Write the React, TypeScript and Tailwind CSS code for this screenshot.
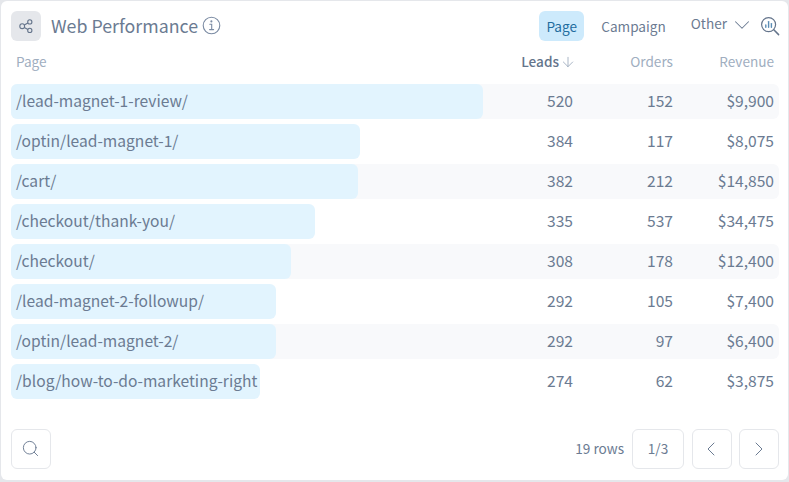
import { ArrowDown, ChevronDown, ChevronLeft, ChevronRight, Search } from "lucide-react";

const rows = [
  { page: "/lead-magnet-1-review/", leads: 520, orders: 152, revenue: "$9,900" },
  { page: "/optin/lead-magnet-1/", leads: 384, orders: 117, revenue: "$8,075" },
  { page: "/cart/", leads: 382, orders: 212, revenue: "$14,850" },
  { page: "/checkout/thank-you/", leads: 335, orders: 537, revenue: "$34,475" },
  { page: "/checkout/", leads: 308, orders: 178, revenue: "$12,400" },
  { page: "/lead-magnet-2-followup/", leads: 292, orders: 105, revenue: "$7,400" },
  { page: "/optin/lead-magnet-2/", leads: 292, orders: 97, revenue: "$6,400" },
  { page: "/blog/how-to-do-marketing-right", leads: 274, orders: 62, revenue: "$3,875" },
];

const maxLeads = 520;

function ShareIcon() {
  return (
    <svg width="16" height="16" viewBox="0 0 16 16" fill="none" stroke="#64748b" strokeWidth="1.1">
      <circle cx="4.2" cy="8.2" r="2.4" />
      <circle cx="11.8" cy="3.9" r="2.1" />
      <circle cx="11.8" cy="12.4" r="2.1" />
      <path d="M6.3 7 L9.9 5 M6.3 9.4 L9.9 11.4" />
    </svg>
  );
}

function InfoIcon() {
  return (
    <svg width="19" height="19" viewBox="0 0 19 19" fill="none" stroke="#7b8ba3" strokeWidth="1.1" strokeLinecap="round">
      <circle cx="9.5" cy="9.5" r="8.3" />
      <path d="M7.8 8.2 H9.7 V13.6 M7.6 13.6 H11.6" />
      <circle cx="9.4" cy="5.4" r="0.5" fill="#7b8ba3" />
    </svg>
  );
}

function InsightIcon() {
  return (
    <svg width="20" height="20" viewBox="0 0 20 20" fill="none" stroke="#64748b" strokeWidth="1.2" strokeLinecap="round">
      <circle cx="8.6" cy="8.6" r="7" />
      <path d="M13.8 13.8 L18.6 18.6" strokeWidth="1.5" />
      <path d="M5.8 11.2 V9" stroke="#5b8db5" strokeWidth="1.4" />
      <path d="M8.6 11.2 V5.6" stroke="#5b8db5" strokeWidth="1.4" />
      <path d="M11.4 11.2 V7.6" stroke="#5b8db5" strokeWidth="1.4" />
    </svg>
  );
}

export default function App() {
  return (
    <div
      className="w-[789px] h-[482px] bg-[#e5e7eb] pl-px pt-px pr-px pb-0.5 text-[#6b7b92]"
      style={{ fontFamily: '"Noto Sans CJK JP", "Noto Sans", sans-serif' }}
    >
      <div className="flex flex-col h-full bg-white rounded-md pl-2.5 pr-[9px] pt-2.5">
        {/* Header */}
        <div className="flex items-center h-[30px]">
          <div className="flex items-center justify-center w-[30px] h-[30px] rounded-md bg-[#e5e7eb]">
            <ShareIcon />
          </div>
          <h1 className="ml-[10px] -mt-0.5 text-[17.8px] leading-[30px]">Web Performance</h1>
          <span className="ml-[4px] -mt-px flex"><InfoIcon /></span>
          <div className="ml-auto flex items-center text-[13.6px] leading-[30px]">
            <button className="w-[45px] h-[30px] pb-[3px] rounded-md bg-[#cdeafc] text-[#1f6d9f]">Page</button>
            <button className="ml-[17px] h-[30px] pb-[3px]">Campaign</button>
            <span className="ml-[25px] -mt-1.5">Other</span>
            <ChevronDown size={26} strokeWidth={0.95} className="ml-[2px] -mt-0.5 mr-[2px]" />
            <span className="ml-[3px] -mr-px -mt-px flex"><InsightIcon /></span>
          </div>
        </div>

        {/* Column titles */}
        <div className="flex items-center h-[21px] mt-[10px] text-[13.6px] leading-[21px] text-[#a0aec0]">
          <div className="flex-1 pl-[5px]">Page</div>
          <div className="w-[102px] flex items-center justify-end font-medium text-[#64748b]">
            Leads
            <ArrowDown size={16} strokeWidth={1.2} className="ml-[1px] -mr-[3px] text-[#94a3b8]" />
          </div>
          <div className="w-[100px] text-right">Orders</div>
          <div className="w-[106px] pr-[5px] text-right">Revenue</div>
        </div>

        {/* Rows */}
        <div className="flex flex-col gap-[5px] mt-[12px]">
          {rows.map((row, i) => (
            <div key={row.page} className={`relative flex items-center h-[35px] pb-[2px] rounded-md text-[15.6px] leading-[33px] ${i % 2 === 0 ? "bg-[#f8f9fb]" : "bg-white"}`}>
              <div
                className="absolute left-0 top-0 h-full rounded-md bg-[#e2f4fe]"
                style={{ width: Math.round((row.leads / maxLeads) * 472) }}
              />
              <div className="relative flex-1 pl-[5px] whitespace-nowrap">{row.page}</div>
              <div className="relative w-[102px] text-right">{row.leads}</div>
              <div className="relative w-[100px] text-right">{row.orders}</div>
              <div className="relative w-[106px] pr-[5px] text-right">{row.revenue}</div>
            </div>
          ))}
        </div>

        {/* Footer */}
        <div className="flex items-center mt-auto mb-[11px] h-10">
          <button className="flex items-center justify-center w-10 h-10 rounded-md border border-[#e5e7eb]">
            <Search size={19} strokeWidth={1.2} className="-ml-px -mt-px" />
          </button>
          <div className="ml-auto flex items-center text-[13.6px]">
            <span className="-mt-0.5">19 rows</span>
            <button className="ml-2 w-[52px] h-10 pb-0.5 rounded-md border border-[#e5e7eb]">1/3</button>
            <button className="ml-2 flex items-center justify-center w-10 h-10 rounded-md border border-[#e5e7eb]">
              <ChevronLeft size={24} strokeWidth={1} className="-ml-0.5" />
            </button>
            <button className="ml-[7px] flex items-center justify-center w-10 h-10 rounded-md border border-[#e5e7eb]">
              <ChevronRight size={24} strokeWidth={1} />
            </button>
          </div>
        </div>
      </div>
    </div>
  );
}
